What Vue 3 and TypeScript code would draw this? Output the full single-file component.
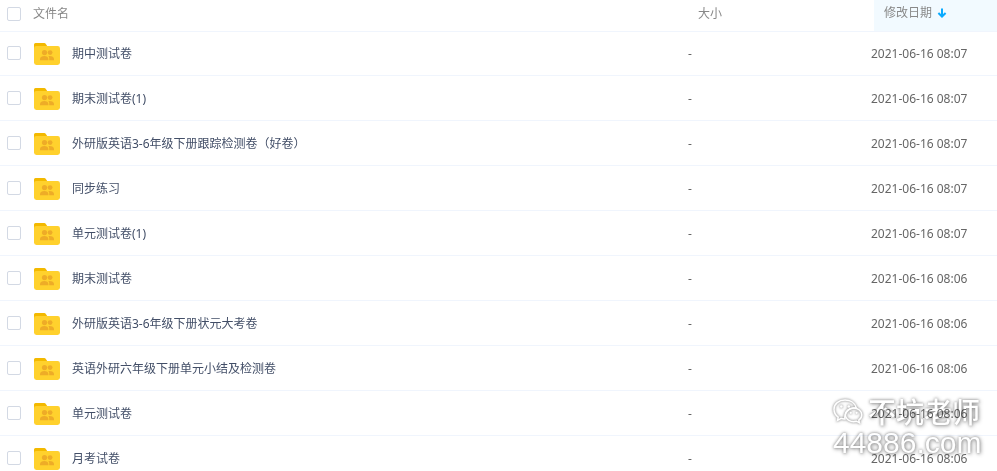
<script setup lang="ts">
import { computed, ref } from 'vue'

interface FileRow {
  id: number
  name: string
  size: string
  modified: string
}

const files: FileRow[] = [
  { id: 1, name: '期中测试卷', size: '-', modified: '2021-06-16 08:07' },
  { id: 2, name: '期末测试卷(1)', size: '-', modified: '2021-06-16 08:07' },
  { id: 3, name: '外研版英语3-6年级下册跟踪检测卷（好卷）', size: '-', modified: '2021-06-16 08:07' },
  { id: 4, name: '同步练习', size: '-', modified: '2021-06-16 08:07' },
  { id: 5, name: '单元测试卷(1)', size: '-', modified: '2021-06-16 08:07' },
  { id: 6, name: '期末测试卷', size: '-', modified: '2021-06-16 08:06' },
  { id: 7, name: '外研版英语3-6年级下册状元大考卷', size: '-', modified: '2021-06-16 08:06' },
  { id: 8, name: '英语外研六年级下册单元小结及检测卷', size: '-', modified: '2021-06-16 08:06' },
  { id: 9, name: '单元测试卷', size: '-', modified: '2021-06-16 08:06' },
  { id: 10, name: '月考试卷', size: '-', modified: '2021-06-16 08:06' },
]

const selected = ref<number[]>([])

const allSelected = computed<boolean>({
  get: () => selected.value.length === files.length,
  set: (on) => {
    selected.value = on ? files.map((f) => f.id) : []
  },
})
</script>

<template>
  <main class="browser">
    <table class="files">
      <thead>
        <tr>
          <th class="col-check"><input v-model="allSelected" class="check" type="checkbox" aria-label="文件名" /></th>
          <th class="col-name">文件名</th>
          <th class="col-size">大小</th>
          <th class="col-date">
            <button class="sort" type="button">
              修改日期
              <svg class="arrow" viewBox="0 0 10 10" aria-hidden="true">
                <path d="M5 0.5V8.5M1.4 5L5 8.5L8.6 5" />
              </svg>
            </button>
          </th>
        </tr>
      </thead>
      <tbody>
        <tr v-for="file in files" :key="file.id">
          <td class="col-check">
            <input v-model="selected" class="check" type="checkbox" :value="file.id" :aria-labelledby="`file-${file.id}`" />
          </td>
          <td class="col-name">
            <div class="entry">
              <svg class="folder" viewBox="0 0 26 22" aria-hidden="true">
                <path fill="#f3b900" d="M1.5 0H10.2C11 0 11.5 .4 12 1.2L13.2 3V8H0V1.5Q0 0 1.5 0Z" />
                <rect fill="#ffd12d" y="3" width="26" height="19" rx="2.4" />
                <g fill="#eeac27">
                  <circle cx="10.5" cy="9.6" r="2.6" />
                  <circle cx="16.1" cy="9.6" r="2.4" />
                  <path d="M6 17.2V15.9C6 14 8 13 10.3 13S14.4 14 14.4 15.9V17.2Z" />
                  <path d="M15.2 17.2V15.6C15.2 14.6 15 13.8 14.4 13.1C17.5 12.7 20 13.8 20 15.9V17.2Z" />
                </g>
              </svg>
              <a :id="`file-${file.id}`" class="link" href="#">{{ file.name }}</a>
            </div>
          </td>
          <td class="col-size">{{ file.size }}</td>
          <td class="col-date">{{ file.modified }}</td>
        </tr>
      </tbody>
    </table>

    <div class="watermark">
      <div class="brand">
        <svg class="wechat" viewBox="0 0 32 28" aria-hidden="true">
          <path d="M6.2 20.2L5.6 23.4L9.2 21.4C10.5 21.8 11.8 22 13 21.9C12 16 16.5 10.8 24.2 10.8C23 5.8 18.3 3 13 3C6.8 3 2 7 2 12.2C2 15.4 3.6 18.3 6.2 20.2Z" />
          <path d="M26.8 23.2L27.4 25.8L24.4 24.2C19 25.8 13.4 22.5 13.4 17.8C13.4 14 17 11 21.5 11S29.8 14 29.8 17.8C29.8 20 28.6 22 26.8 23.2Z" />
          <g class="eyes">
            <circle cx="9.3" cy="9.5" r="1.3" />
            <circle cx="16.8" cy="9.5" r="1.3" />
            <circle cx="18.8" cy="15.8" r="1.1" />
            <circle cx="24.6" cy="15.8" r="1.1" />
          </g>
        </svg>
        <span>不坑老师</span>
      </div>
      <div class="site">44886.com</div>
    </div>
  </main>
</template>

<style>
body {
  margin: 0;
  background: #fff;
}
</style>

<style scoped>
.browser {
  position: relative;
  height: 100vh;
  overflow: hidden;
  background: #fff;
  font-family: "Noto Sans", "Noto Sans CJK SC", sans-serif;
  font-size: 12px;
  line-height: 16px;
  color: #666;
}

.files {
  width: 100%;
  table-layout: fixed;
  border-collapse: separate;
  border-spacing: 0;
}

th,
td {
  box-sizing: border-box;
  height: 45px;
  padding: 2px 0 0;
  border-bottom: 1px solid #f0f5fd;
  text-align: left;
  vertical-align: middle;
  font-weight: 400;
}

th {
  height: 32px;
  padding: 0 0 4px;
  color: #888;
}

tbody tr:first-child td {
  height: 44px;
  padding-top: 0;
}

.col-check {
  width: 33px;
  padding-left: 7px;
}

td.col-check {
  padding-top: 0;
  padding-bottom: 1px;
}

.col-size {
  width: 183px;
}

th.col-size {
  padding-left: 10px;
}

.col-date {
  width: 126px;
}

th.col-date {
  padding: 0 0 0 3px;
}

.check {
  display: block;
  appearance: none;
  box-sizing: border-box;
  width: 14px;
  height: 14px;
  margin: 0;
  border: 1px solid #d3d9e4;
  border-radius: 2px;
  background: #fff;
}

.check:checked {
  border-color: #09aaff;
  background: #09aaff;
}

.sort {
  display: flex;
  align-items: center;
  gap: 5px;
  width: 100%;
  height: 31px;
  padding: 0 0 5px 10px;
  border: 0;
  background: #f2faff;
  font: inherit;
  color: inherit;
}

.arrow {
  width: 10px;
  height: 10px;
  fill: none;
  stroke: #09aaff;
  stroke-width: 2;
}

.entry {
  display: flex;
  align-items: center;
  gap: 12px;
  padding-left: 1px;
}

.folder {
  flex: none;
  width: 26px;
  height: 22px;
}

.link {
  color: #424e67;
  text-decoration: none;
  white-space: nowrap;
}

.watermark {
  position: absolute;
  right: 17px;
  bottom: 12px;
  width: 148px;
  color: #fff;
  font-family: "Noto Sans CJK SC", sans-serif;
  font-size: 28px;
  font-weight: 500;
  line-height: 32px;
  text-shadow: 0 0 3px #888, 1px 1px 4px #999;
  mix-blend-mode: multiply;
  pointer-events: none;
}

.brand {
  display: flex;
  align-items: center;
  justify-content: space-between;
}

.site {
  padding-left: 1px;
  font-family: "Liberation Sans", sans-serif;
  font-size: 30px;
}

.wechat {
  width: 32px;
  height: 28px;
  overflow: visible;
  fill: none;
  stroke: #fff;
  stroke-width: 1.5;
  filter: drop-shadow(0 0 1px #aaa) drop-shadow(0 0 1px #bbb);
}

.eyes {
  fill: #fff;
  stroke: none;
}
</style>
